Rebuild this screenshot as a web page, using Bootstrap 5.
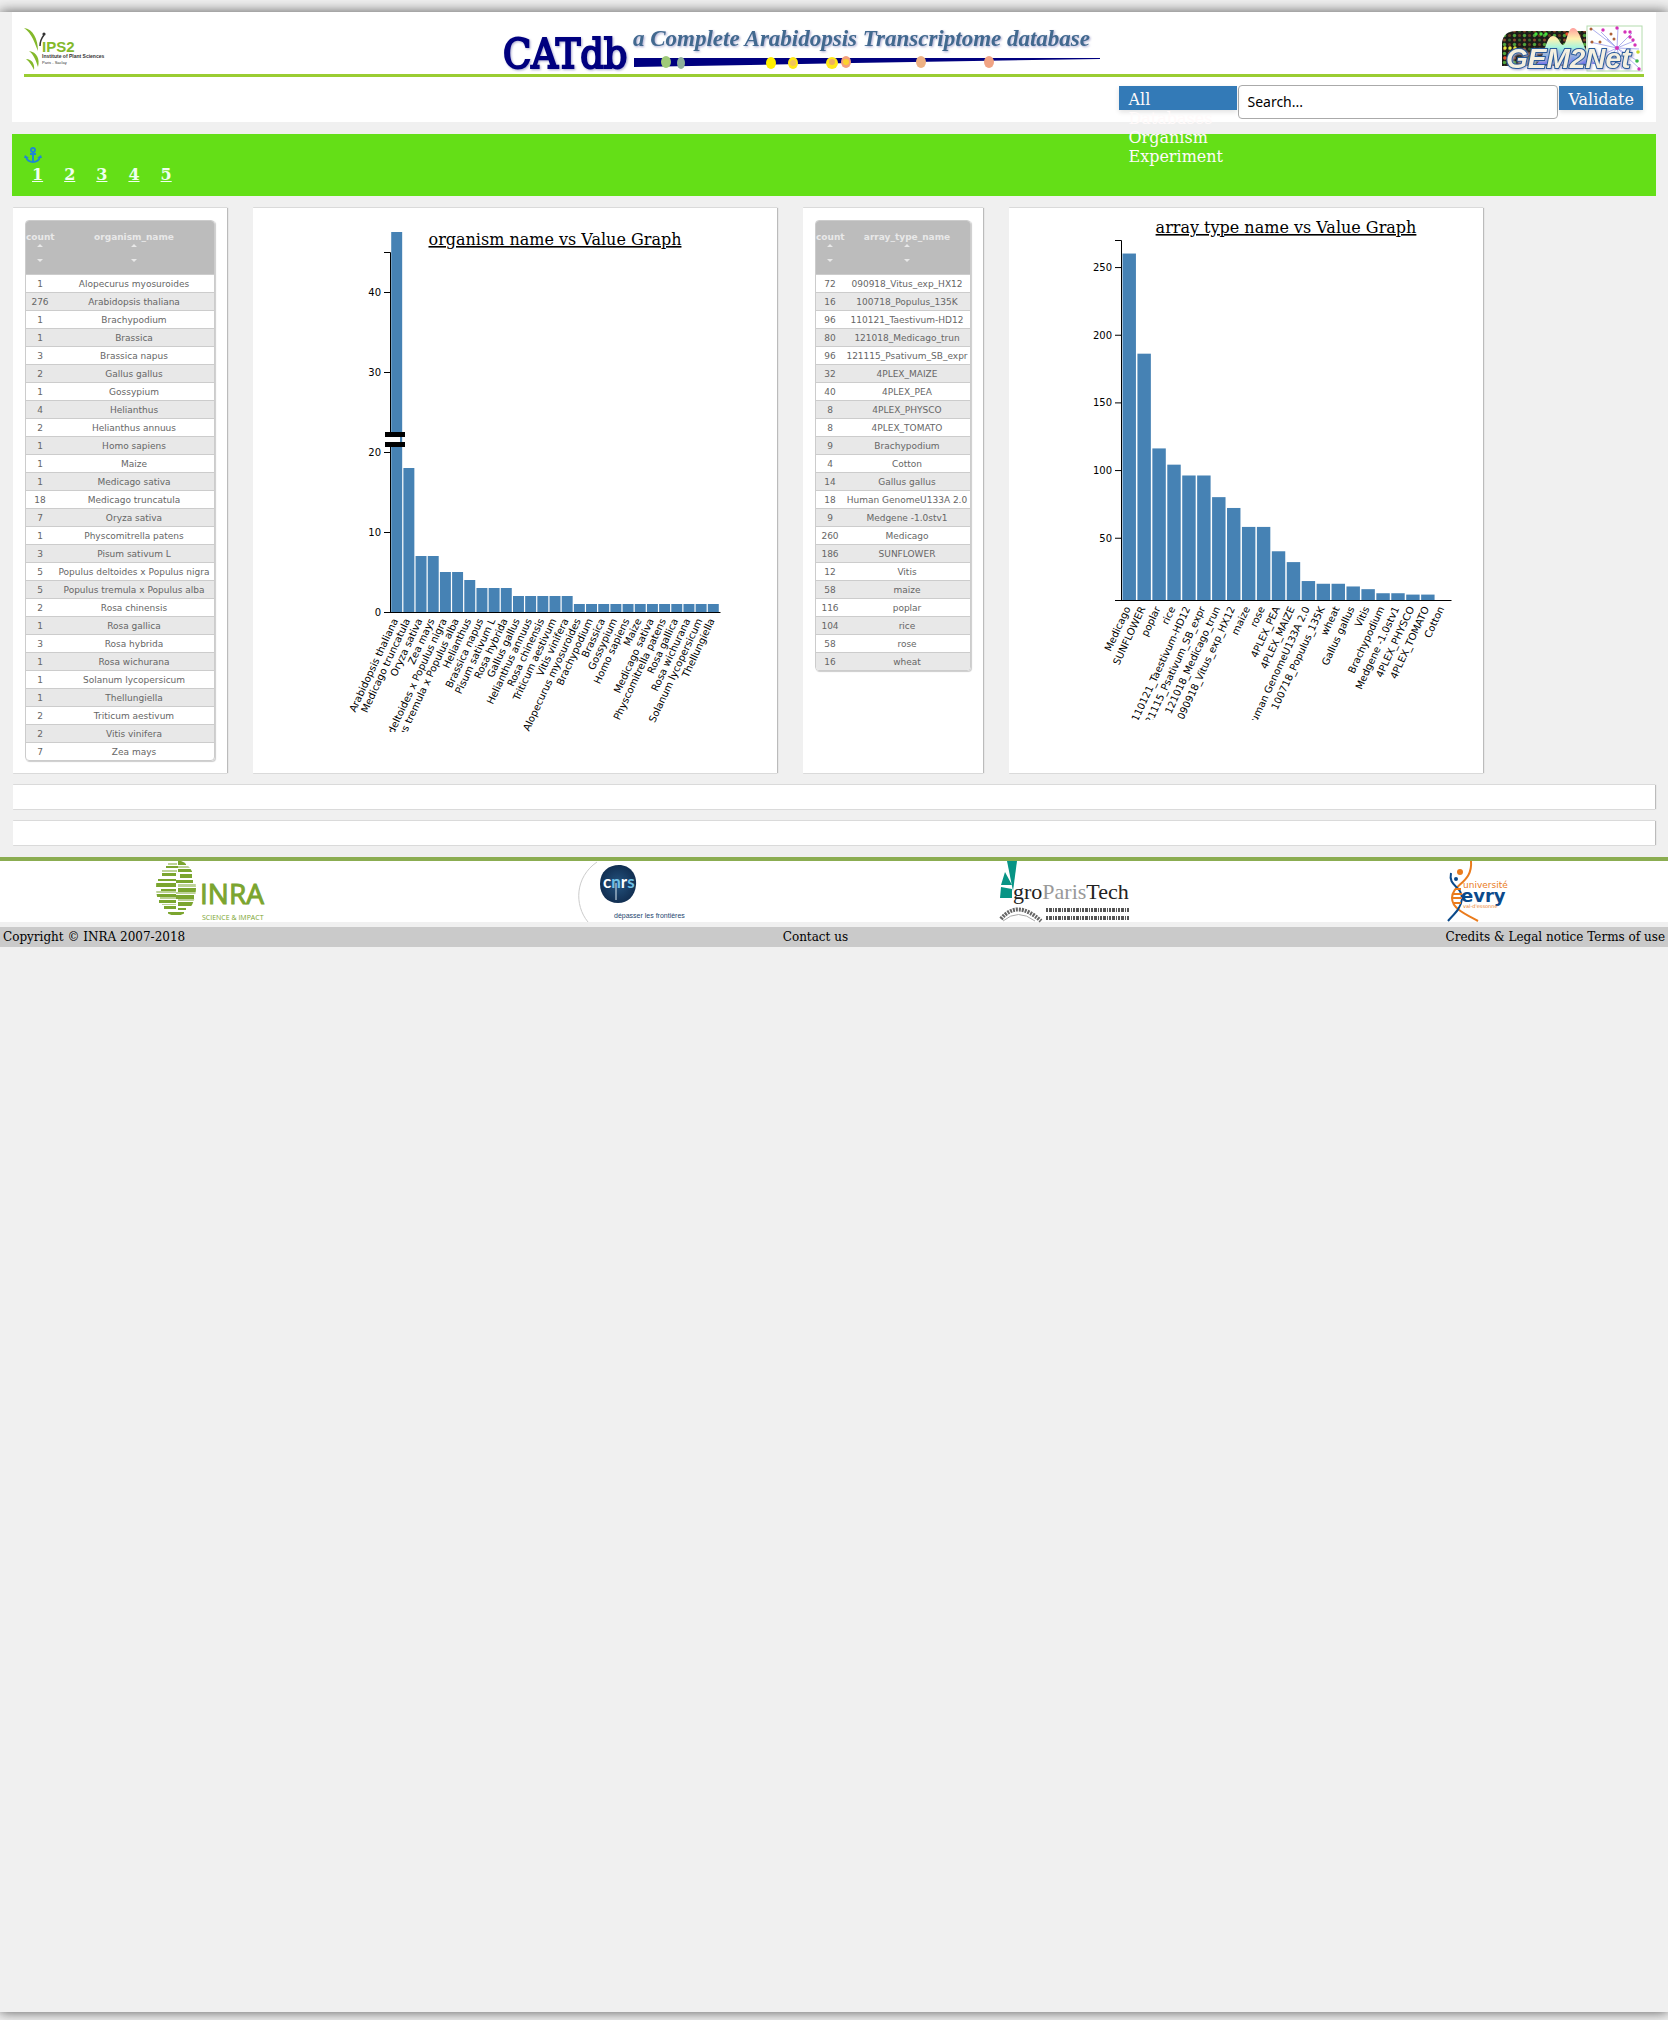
<!DOCTYPE html>
<html lang="en">
<head>
<meta charset="utf-8">
<meta name="viewport" content="width=device-width, initial-scale=1">
<title>CATdb</title>
<link href="https://cdn.jsdelivr.net/npm/bootstrap@5.3.0/dist/css/bootstrap.min.css" rel="stylesheet">
<style>
  html { height: 100%; background: #f0f0f0; }
  body { min-height: 100%; padding: 12px 0 8px; background: #f0f0f0; font-family: "DejaVu Serif", serif; font-size: 16px; line-height: 19px; color: #000; }
  .page-shell { background: #f0f0f0; box-shadow: 0 0 12px #555; }
  .site-head { background: #fff; margin: 0 12px 12px; padding: 12px 12px 3px; }
  .logo-row { height: 53px; border-bottom: 3px solid #9acd32; }
  .logo-row svg, .partners svg { overflow: visible; }
  .soft-shadow { filter: drop-shadow(1px 1px 1px #a9a9d0); }
  .search-row { padding: 8px 1px 0 0; }
  .blue-box { background: #337ab7; color: snow; height: 24px; margin-top: 1px; border: 0; box-shadow: 0 2px 5px rgba(0,0,0,.12); }
  .scope-list { width: 118px; padding: 4px 9px; position: relative; z-index: 2; }
  .scope-list a { color: snow; text-decoration: none; display: block; }
  .search-box { width: 320px; height: 34px; margin: 0 1px; padding: 0 8px 2px; border: 1px solid #aaa; border-radius: 4px; font-family: "Noto Sans", sans-serif; font-size: 14px; background: #fff; color: #000; }
  .search-box::placeholder { color: #000; opacity: 1; }
  .btn-validate { padding: 3px 9px 1px; }
  .step-nav { background: #64df17; margin: 0 12px 12px; padding: 12px; height: 62px; }
  .step-nav a { color: #f0fff0; font-weight: bold; }
  .step-nav ul { padding: 1px 0 0 8px; gap: 21px; }
  .anchor-link { display: block; height: 18px; }
  .anchor-link svg { display: block; }
  .panels { padding: 0 13px; gap: 26px; }
  .pane { background: #fff; padding: 12px; box-shadow: 1px 0 1px #bbb, 0 1px 0 #e0e0e0, 0 -1px 0 #e0e0e0; }
  .pane-organism { width: 214px; }
  .pane-array { width: 180px; }
  .pane-bar { margin: 12px 13px 0; height: 24px; padding: 0; }
  .data-grid { width: 100%; border-collapse: separate; border-spacing: 0; border: 1px solid #ccc; border-radius: 4px; box-shadow: 1px 1px 1px #ccc; overflow: hidden; font-family: "DejaVu Sans", sans-serif; font-size: 9px; line-height: 15px; color: #666; text-align: center; table-layout: fixed; }
  .data-grid th { background: #bcbcbc; color: #e8e8e8; height: 53px; padding: 9px 0 0; vertical-align: top; }
  .data-grid th:first-child { width: 28px; }
  .data-grid th svg { display: block; margin: -1px auto 0; }
  .data-grid td { padding: 2px 0 0; border-top: 1px solid #ccc; white-space: nowrap; }
  .data-grid tbody tr:nth-child(even) { background: #e8e8e8; }
  .plot { display: block; overflow: hidden; }
  .plot-organism { margin-top: 12px; }
  .plot .bar-fill { fill: steelblue; }
  .plot .axis-line { fill: none; stroke: #000; }
  .plot .axis-text { font: 10px "DejaVu Sans", sans-serif; }
  .plot .plot-title { font: 16px "DejaVu Serif", serif; text-decoration: underline; text-anchor: middle; }
  .partners { margin-top: 12px; background: #fff; border-top: 4px solid #8bad51; height: 65px; }
  .site-foot { margin-top: 5px; background: #cacaca; height: 20px; padding: 0 3px; font-size: 12px; line-height: 20px; }
  .site-foot a { color: #000; text-decoration: none; }
</style>
<script src="https://cdn.jsdelivr.net/npm/bootstrap@5.3.0/dist/js/bootstrap.bundle.min.js"></script>
</head>
<body class="d-flex flex-column">
<div class="page-shell flex-grow-1">
  <header class="site-head">
    <div class="logo-row d-flex justify-content-between">
      <a href="#" aria-label="IPS2"><svg width="84" height="50" viewBox="0 0 84 50">
        <g fill="#84b92b"><path d="M0 4C9 5 14 15 14 27C11 20 8 9 0 4Z"/><path d="M5 27C13 28 16 35 14 43C12 37 10 31 5 27Z"/><path d="M2 35C8 35 11 40 10 46C8 42 6 38 2 35Z"/></g>
        <path d="M16 22Q16 16 20 11" stroke="#333" stroke-width="1.5" fill="none"/><circle cx="20" cy="10" r="1.6" fill="#333"/>
        <text x="18" y="28" font-family="Liberation Sans, sans-serif" font-weight="bold" font-size="15" fill="#84b92b">IPS2</text>
        <text x="18" y="34" font-family="Liberation Sans, sans-serif" font-weight="bold" font-size="5" fill="#333">Institute of Plant Sciences</text>
        <text x="18" y="40" font-family="Liberation Sans, sans-serif" font-size="4" fill="#333">Paris - Saclay</text>
      </svg></a>
      <a href="#" aria-label="CATdb"><svg width="604" height="50" viewBox="0 0 604 50">
        <text class="soft-shadow" x="0" y="44" font-family="DejaVu Serif Condensed, DejaVu Serif, serif" font-size="41" fill="#00007f" stroke="#00007f" stroke-width="2">CATdb</text>
        <text class="soft-shadow" x="130" y="22" font-family="Liberation Serif, serif" font-style="italic" font-weight="bold" font-size="23" fill="#42698f">a Complete Arabidopsis Transcriptome database</text>
        <path d="M131 34L597 34L597 35L350 39L131 43Z" fill="#00007f"/>
        <ellipse cx="163" cy="38" rx="5" ry="6" fill="#9fca78"/><ellipse cx="178" cy="39" rx="4" ry="6" fill="#8db09a"/>
        <ellipse cx="268" cy="39" rx="5" ry="6" fill="#ffee00"/><ellipse cx="290" cy="39" rx="5" ry="6" fill="#ffe81a"/><circle cx="290" cy="39" r="3" fill="#f2c45c"/>
        <ellipse cx="329" cy="39" rx="6" ry="6" fill="#ffe81a"/><circle cx="329" cy="38" r="3" fill="#f0b060"/><ellipse cx="343" cy="38" rx="5" ry="6" fill="#f4a07c"/><circle cx="343" cy="38" r="3" fill="#fbd22c"/>
        <ellipse cx="418" cy="38" rx="5" ry="6" fill="#edb183"/><ellipse cx="486" cy="38" rx="5" ry="6" fill="#f0a383"/>
      </svg></a>
      <a href="#" aria-label="GEM2Net"><svg width="142" height="50" viewBox="0 0 142 50">
        <defs>
          <pattern id="spots" width="10" height="9" patternUnits="userSpaceOnUse"><rect width="10" height="9" fill="#1c1c18"/><circle cx="2.5" cy="2.5" r="1.7" fill="#4fa33c"/><circle cx="7.5" cy="2.5" r="1.5" fill="#6a3a20"/><circle cx="2.5" cy="7" r="1.5" fill="#8a4a2c"/><circle cx="7.5" cy="7" r="1.5" fill="#356b2c"/></pattern>
          <linearGradient id="peak" x1="0" y1="0" x2="0" y2="1"><stop offset="0" stop-color="#ff9d9d"/><stop offset=".3" stop-color="#fff2b0"/><stop offset=".55" stop-color="#a5f5e0"/><stop offset="1" stop-color="#6f6ff0"/></linearGradient>
        </defs>
        <path d="M0 42V18Q2 7 14 7H84V42Z" fill="url(#spots)"/>
        <g fill="#e6e63c"><circle cx="3" cy="24" r="1.7"/><circle cx="8" cy="24" r="1.7"/><circle cx="13" cy="24" r="1.7"/></g><g fill="#e8502c"><circle cx="3" cy="34" r="1.7"/><circle cx="8" cy="29" r="1.7"/><circle cx="65" cy="10" r="1.7"/></g><g fill="#46e03c"><circle cx="34" cy="10" r="1.7"/><circle cx="39" cy="10" r="1.7"/><circle cx="44" cy="10" r="1.7"/></g>
        <rect x="85" y="2" width="55" height="45" fill="#fff" stroke="#b4dcae"/>
        <path stroke="#aeb0ee" d="M115 24L90 5M115 24L99 8M115 24L116 4M115 24L130 9M115 24L137 25M115 24L134 36M115 24L137 44M115 24L120 45M115 24L100 43M115 24L89 36M115 24L88 18M115 24L105 15M115 24L126 13M115 24L132 17"/>
        <g fill="#d432b8"><circle cx="101" cy="6" r="1.7"/><circle cx="115" cy="4" r="1.7"/><circle cx="123" cy="8" r="1.7"/><circle cx="128" cy="8" r="1.7"/><circle cx="128" cy="13" r="1.7"/><circle cx="131" cy="16" r="1.7"/><circle cx="133" cy="21" r="1.7"/><circle cx="115" cy="24" r="2"/><circle cx="137" cy="45" r="1.7"/></g>
        <g fill="#ad6138"><circle cx="89" cy="5" r="1.5"/><circle cx="90" cy="18" r="1.5"/><circle cx="98" cy="18" r="1.5"/><circle cx="109" cy="10" r="1.5"/><circle cx="112" cy="15" r="1.5"/></g><circle cx="136" cy="28" r="1.8" fill="#c8d92a"/><circle cx="135" cy="37" r="1.8" fill="#39b84a"/>
        <path d="M34 40C43 36 43 12 51 12C57 12 58 21 61 21C65 21 65 4 71 4C79 4 80 28 94 40Z" fill="url(#peak)"/>
        <text class="soft-shadow" x="4" y="44" font-family="Liberation Sans, sans-serif" font-style="italic" font-weight="bold" font-size="28" fill="#f4efe0" stroke="#285a9a" stroke-width="2" paint-order="stroke">GEM2Net</text>
      </svg></a>
    </div>
    <form class="search-row d-flex justify-content-end align-items-start" onsubmit="return false">
      <ul class="blue-box scope-list list-unstyled mb-0">
        <li><a href="#">All Databases</a></li>
        <li><a href="#">Organism</a></li>
        <li><a href="#">Experiment</a></li>
      </ul>
      <input class="search-box" type="text" placeholder="Search..." aria-label="Search">
      <button class="blue-box btn-validate" type="submit">Validate</button>
    </form>
  </header>

  <nav class="step-nav">
    <a class="anchor-link" href="#" aria-label="Anchor"><svg width="18" height="18" viewBox="0 0 18 18" fill="none" stroke="#2088d0" stroke-width="2">
      <circle cx="9" cy="4" r="2"/><path d="M9 6V16M6 8H12"/><path d="M2 11C3 14 6 16 9 16C12 16 15 14 16 11"/><path d="M0 12L1 9L5 12ZM18 12L17 9L13 12Z" fill="#2088d0" stroke="none"/></svg></a>
    <ul class="list-unstyled d-flex mb-0">
      <li><a href="#">1</a></li><li><a href="#">2</a></li><li><a href="#">3</a></li><li><a href="#">4</a></li><li><a href="#">5</a></li>
    </ul>
  </nav>

  <main>
    <div class="panels d-flex flex-wrap">
      <section class="pane pane-organism"><table class="data-grid" id="organismTable"></table></section>
      <section class="pane"><svg class="plot plot-organism" id="organismPlot" width="500" height="500"></svg></section>
      <section class="pane pane-array"><table class="data-grid" id="arrayTable"></table></section>
      <section class="pane"><svg class="plot" id="arrayPlot" width="450" height="500"></svg></section>
    </div>
    <section class="pane pane-bar"></section>
    <section class="pane pane-bar"></section>
  </main>

  <footer>
    <div class="partners d-flex justify-content-around">
      <a href="#" aria-label="INRA"><svg width="112" height="61" viewBox="0 0 112 61">
        <defs><clipPath id="egg"><ellipse cx="20" cy="27" rx="20" ry="28"/></clipPath></defs>
        <g clip-path="url(#egg)" fill="#7ba52f"><path d="M22 0h8v4h-8zM10 5h12v2H10zM22 8h14v3H22zM6 12h14v3H6zM24 13h12v4H24zM2 18h18v2H2zM20 19h17v3H20zM0 22h20v4H0zM22 27h18v4H22zM5 28h15v2H5zM0 33h20v3H0zM20 34h18v4H20zM3 39h17v3H3zM22 41h16v4H22zM8 45h12v3H8zM22 47h8v2H22zM12 51h16v3H12z"/><path d="M12 2h9v2h-9zM22 5h12v2H22zM6 9h15v2H6zM22 23h18v3H22zM0 30h20v2H0zM20 31h20v2H20zM4 36h16v2H4zM22 38h18v2H22zM6 43h14v1H6z" opacity=".5"/></g>
        <text x="44" y="43" font-family="Open Sans, sans-serif" font-size="28" fill="#7ba52f" stroke="#7ba52f">INRA</text>
        <text x="46" y="59" font-family="Open Sans, sans-serif" font-size="7" fill="#7ba52f">SCIENCE &amp; IMPACT</text>
      </svg></a>
      <a href="#" aria-label="CNRS"><svg width="110" height="61" viewBox="0 0 110 61">
        <path d="M18 1C-4 16 -5 44 9 61" fill="none" stroke="#ccc"/>
        <defs><radialGradient id="globe"><stop offset="0" stop-color="#24537f"/><stop offset="1" stop-color="#122f52"/></radialGradient></defs>
        <path d="M21 23C21 10 30 4 40 4C51 4 58 13 57 24C56 35 49 42 39 42C28 42 21 34 21 23Z" fill="url(#globe)"/>
        <text x="24" y="27" font-family="Lato, sans-serif" font-weight="bold" font-size="17" fill="#fff">c<tspan fill="#6fc0e6">n</tspan>r<tspan fill="#6fc0e6">s</tspan></text><path d="M37 22V39" stroke="#dbe9f2"/>
        <text x="35" y="57" font-family="Liberation Sans, sans-serif" font-size="7" fill="#25466f">dépasser les frontières</text>
      </svg></a>
      <a href="#" aria-label="AgroParisTech"><svg width="136" height="61" viewBox="0 0 136 61">
        <path d="M5 11L12 24H1ZM1 26L12 28V37H0Z" fill="#079485"/>
        <path d="M7 0H17L13 30Z" fill="#079485"/>
        <text x="13" y="38" font-family="Liberation Serif, serif" font-size="22" fill="#222">gro<tspan fill="#999">Paris</tspan><tspan>Tech</tspan></text>
        <path d="M1 58Q17 38 41 60" fill="none" stroke="#666" stroke-width="4" stroke-dasharray="2 1"/><path d="M3 60Q18 47 35 60" fill="none" stroke="#aaa"/>
        <path d="M46 49H129M46 57H129" stroke="#555" stroke-width="4" stroke-dasharray="2 1 3 1 1 1"/>
      </svg></a>
      <a href="#" aria-label="Université d'Evry"><svg width="66" height="61" viewBox="0 0 66 61">
        <g fill="none" stroke-width="2"><path d="M24 0C26 22 5 23 5 37C5 48 20 54 31 60" stroke="#ea7b1c"/><path d="M4 12C1 26 15 24 15 38C14 48 6 54 1 60" stroke="#0b4a8b"/><path d="M5 33H15M5 37H15M7 42H14M9 28H14" stroke="#ea7b1c"/></g>
        <circle cx="13" cy="11" r="3" fill="#ea7b1c"/><circle cx="9" cy="18" r="2" fill="#0b4a8b"/>
        <text x="16" y="27" font-family="DejaVu Sans, sans-serif" font-size="9" fill="#ea7b1c">université</text>
        <text x="14" y="41" font-family="DejaVu Sans, sans-serif" font-weight="bold" font-size="18" fill="#0b4a8b">evry</text>
        <text x="16" y="47" font-family="DejaVu Sans, sans-serif" font-size="5" fill="#ea7b1c">val-d'essonne</text>
      </svg></a>
    </div>
    <div class="site-foot d-flex justify-content-between">
      <span>Copyright © INRA 2007-2018</span>
      <a href="#">Contact us</a>
      <span><a href="#">Credits &amp; Legal notice</a> <a href="#">Terms of use</a></span>
    </div>
  </footer>
</div>
<script>
const organisms = [[1,"Alopecurus myosuroides"],[276,"Arabidopsis thaliana"],[1,"Brachypodium"],[1,"Brassica"],[3,"Brassica napus"],[2,"Gallus gallus"],[1,"Gossypium"],[4,"Helianthus"],[2,"Helianthus annuus"],[1,"Homo sapiens"],[1,"Maize"],[1,"Medicago sativa"],[18,"Medicago truncatula"],[7,"Oryza sativa"],[1,"Physcomitrella patens"],[3,"Pisum sativum L"],[5,"Populus deltoides x Populus nigra"],[5,"Populus tremula x Populus alba"],[2,"Rosa chinensis"],[1,"Rosa gallica"],[3,"Rosa hybrida"],[1,"Rosa wichurana"],[1,"Solanum lycopersicum"],[1,"Thellungiella"],[2,"Triticum aestivum"],[2,"Vitis vinifera"],[7,"Zea mays"]];
const arrays = [[72,"090918_Vitus_exp_HX12"],[16,"100718_Populus_135K"],[96,"110121_Taestivum-HD12"],[80,"121018_Medicago_trun"],[96,"121115_Psativum_SB_expr"],[32,"4PLEX_MAIZE"],[40,"4PLEX_PEA"],[8,"4PLEX_PHYSCO"],[8,"4PLEX_TOMATO"],[9,"Brachypodium"],[4,"Cotton"],[14,"Gallus gallus"],[18,"Human GenomeU133A 2.0"],[9,"Medgene -1.0stv1"],[260,"Medicago"],[186,"SUNFLOWER"],[12,"Vitis"],[58,"maize"],[116,"poplar"],[104,"rice"],[58,"rose"],[16,"wheat"]];
const arrows = '<svg width="6" height="20" viewBox="0 0 6 20" fill="#e8e8e8"><path d="M0 3L3 0L6 3ZM0 15L3 18L6 15Z"/></svg>';
function fillTable(id, label, rows) {
  document.getElementById(id).innerHTML =
    `<thead><tr><th scope="col">count${arrows}</th><th scope="col">${label}${arrows}</th></tr></thead><tbody>` +
    rows.map(r => `<tr><td>${r[0]}</td><td>${r[1]}</td></tr>`).join("") + "</tbody>";
}
function drawPlot(id, title, rows, left, min, max, ticks, axisBreak) {
  const w = 330, h = 360, step = w / (rows.length + .1), y = v => h - (v - min) * h / (max - min);
  let out = `<g transform="translate(${left},20)">`;
  const bars = [...rows].sort((a, b) => b[0] - a[0]);
  bars.forEach((r, i) => {
    const x = step * (i + .1);
    out += `<rect class="bar-fill" x="${x}" y="${y(r[0])}" width="${step * .9}" height="${h - y(r[0])}"/>`;
    out += `<g transform="translate(${x + step * .45},${h})"><text class="axis-text" transform="rotate(-65)" text-anchor="end" x="-7" y="5">${r[1]}</text></g>`;
  });
  out += `<path class="axis-line" d="M-6 .5H.5V${h}.5M-6 ${h}.5H${w}.5"/>`;
  ticks.forEach(t => { out += `<path class="axis-line" d="M-6 ${y(t) + .5}H0"/><text class="axis-text" x="-9" y="${y(t) + 3}" text-anchor="end" dy="1">${t}</text>`; });
  if (axisBreak) out += '<path d="M-5 185H10V190H-5Z" fill="#fff"/><path d="M-5 180H15V185H-5ZM-5 190H15V195H-5Z"/>';
  out += `<text class="plot-title" x="${w / 2}" y="-7">${title}</text></g>`;
  document.getElementById(id).innerHTML = out;
}
fillTable("organismTable", "organism_name", organisms);
fillTable("arrayTable", "array_type_name", arrays);
drawPlot("organismPlot", "organism name vs Value Graph", organisms, 125, 0, 45, [0,10,20,30,40], true);
drawPlot("arrayPlot", "array type name vs Value Graph", arrays, 100, 4, 270, [50,100,150,200,250], false);
</script>
</body>
</html>
